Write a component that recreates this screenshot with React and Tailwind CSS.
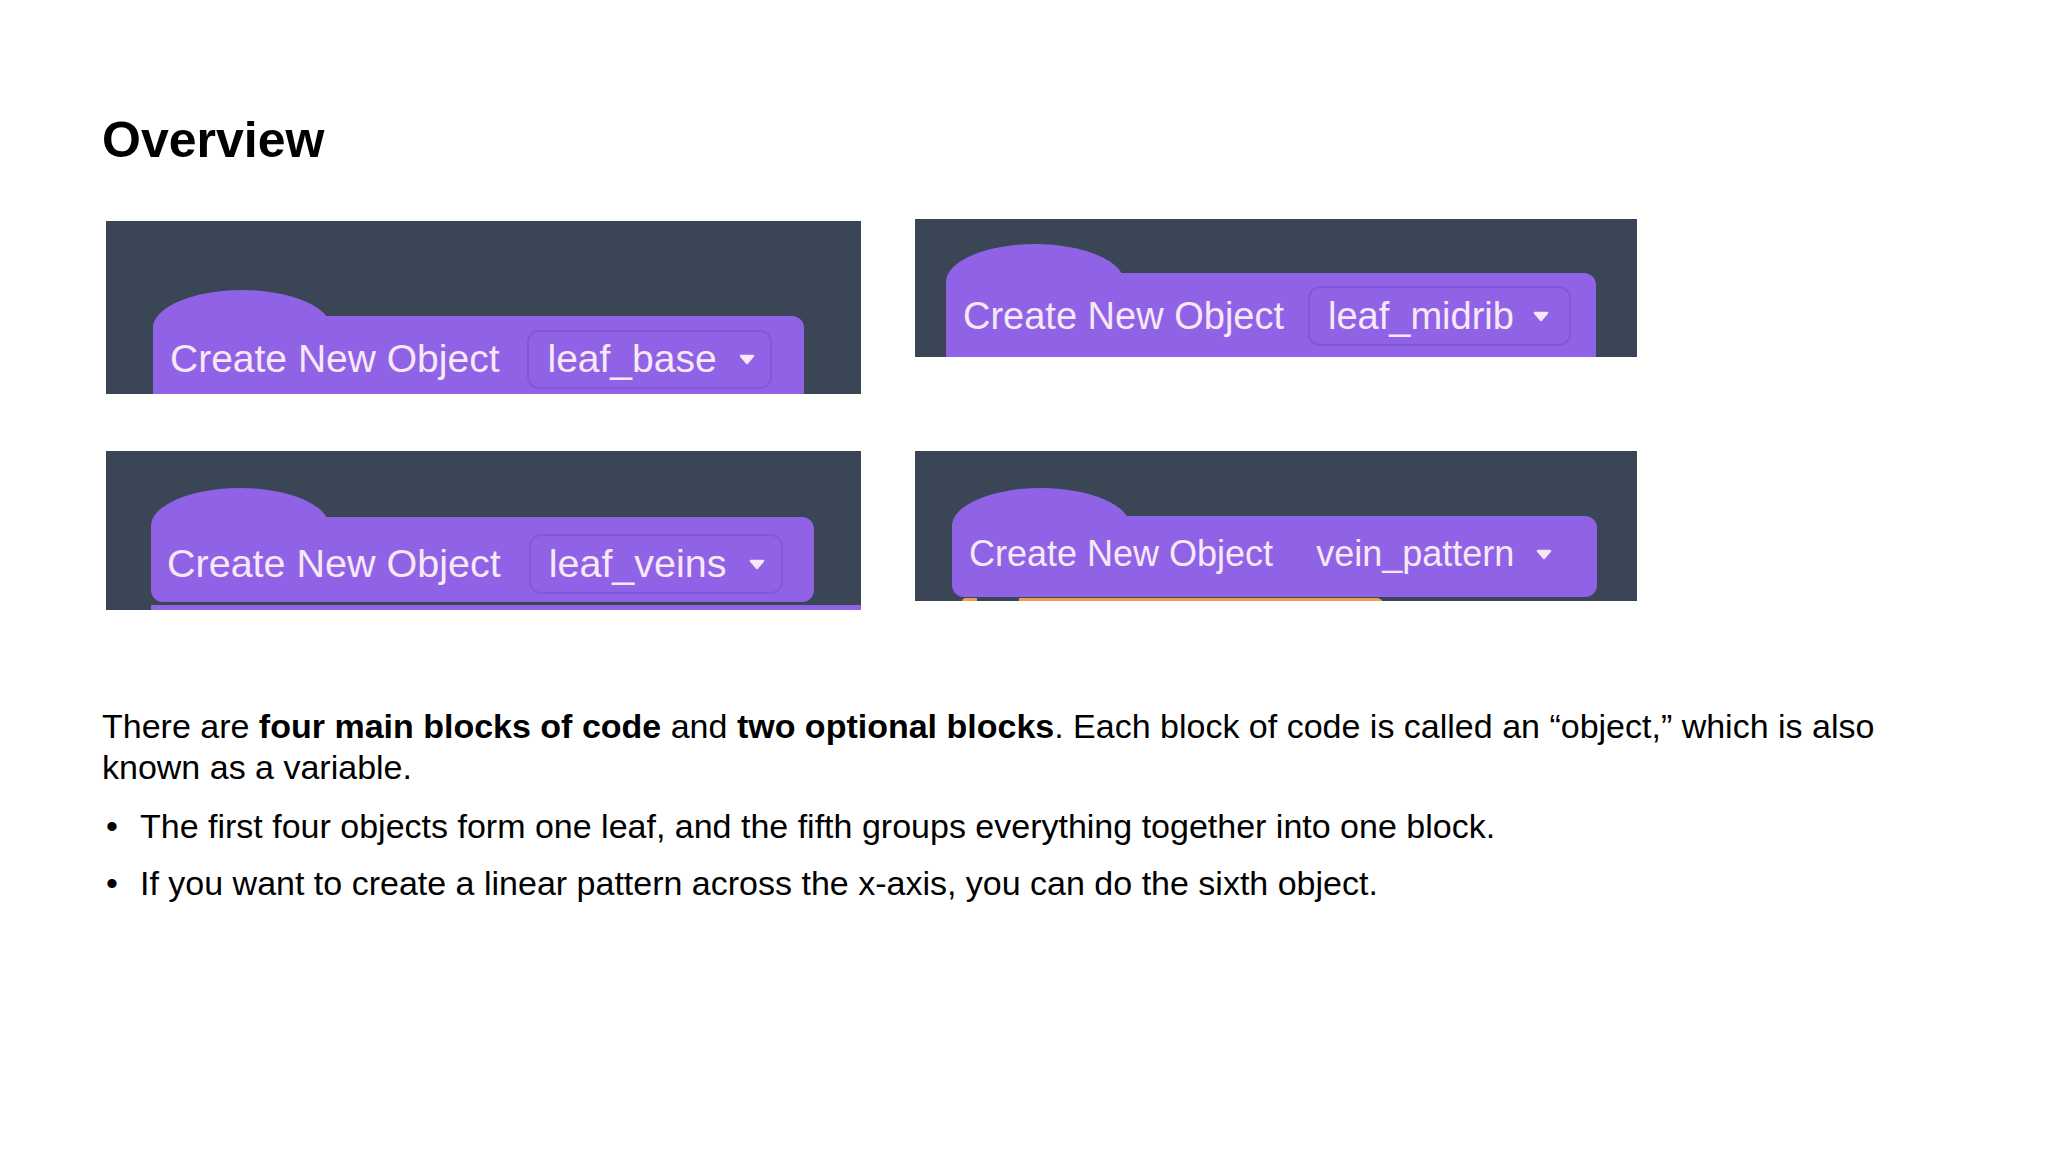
import React from 'react'

const PURPLE = 'bg-[#9063e6]'

function Arrow() {
  return (
    <svg width="16" height="11" viewBox="0 0 16 11" className="shrink-0">
      <path d="M2 2 L14 2 L8 9 Z" fill="#f7e8f7" stroke="#f7e8f7" strokeWidth="2.5" strokeLinejoin="round" />
    </svg>
  )
}

function Block({ b }) {
  return (
    <div
      className="bg-[#3a4556] overflow-hidden flex flex-col"
      style={{ width: b.w, height: b.h, marginTop: b.mt || 0, paddingLeft: b.left, paddingTop: b.hatTop }}
    >
      <div className={`${PURPLE} w-[178px] h-[62px] rounded-t-[89px_38px] shrink-0`} style={{ marginBottom: -(62 - b.rise) }} />
      <div
        className={`${PURPLE} rounded-[12px] flex items-start shrink-0 relative`}
        style={{ width: b.bodyW, height: b.bodyH, paddingLeft: b.pl, paddingTop: b.ddTop, gap: b.gap }}
      >
        <span
          className="text-[#f7e8f7] whitespace-nowrap flex items-center"
          style={{ fontSize: b.fs, height: b.ddH }}
        >
          Create New Object
        </span>
        <div
          className={`flex items-center rounded-[12px] border-2 ${b.border ? 'border-[#8456da]' : 'border-transparent'}`}
          style={{ height: b.ddH, paddingLeft: b.ddPl, paddingRight: b.ddPr, gap: b.arrowGap }}
        >
          <span className="text-[#f7e8f7] whitespace-nowrap" style={{ fontSize: b.fs }}>{b.name}</span>
          <Arrow />
        </div>
      </div>
      {b.strip === 'purple' && <div className={`${PURPLE} h-[6px] mt-[3px] shrink-0`} />}
      {b.strip === 'orange' && (
        <div className="flex h-[6px] mt-[1px] shrink-0 ml-[10px]">
          <div className="w-[15px] bg-[#ef9f55] rounded-tl-[4px]" />
          <div className="w-[42px]" />
          <div className="w-[364px] bg-[#ef9f55] rounded-tr-[6px]" />
        </div>
      )}
    </div>
  )
}

const blocks = [
  { w: 755, h: 173, mt: 2, left: 47, hatTop: 69, rise: 26, bodyW: 651, bodyH: 110, pl: 17, ddTop: 14, ddH: 59, fs: 39, gap: 28, name: 'leaf_base', ddPl: 18, ddPr: 15, arrowGap: 22, border: true },
  { w: 722, h: 138, mt: 0, left: 31, hatTop: 25, rise: 29, bodyW: 650, bodyH: 110, pl: 17, ddTop: 13, ddH: 60, fs: 38, gap: 24, name: 'leaf_midrib', ddPl: 18, ddPr: 20, arrowGap: 19, border: true },
  { w: 755, h: 159, mt: 0, left: 45, hatTop: 37, rise: 29, bodyW: 663, bodyH: 85, pl: 16, ddTop: 17, ddH: 60, fs: 39.5, gap: 28, name: 'leaf_veins', ddPl: 18, ddPr: 16, arrowGap: 22, border: true, strip: 'purple' },
  { w: 722, h: 150, mt: 0, left: 37, hatTop: 37, rise: 28, bodyW: 645, bodyH: 81, pl: 17, ddTop: 8, ddH: 60, fs: 36, gap: 24, name: 'vein_pattern', ddPl: 17, ddPr: 24, arrowGap: 22, border: false, strip: 'orange' },
]

export default function App() {
  return (
    <div className="min-h-screen w-full bg-white pl-[102px] pt-[115px] font-['Liberation_Sans',Arial,sans-serif] text-black">
      <h1 className="text-[50px] leading-none font-bold">Overview</h1>

      <div className="grid grid-cols-[755px_722px] gap-x-[54px] gap-y-[57px] items-start mt-[54px] ml-[4px]">
        {blocks.map(b => <Block key={b.name} b={b} />)}
      </div>

      <div className="mt-[96px] w-[1820px] text-[34px] leading-[40.5px]">
        <p>
          There are <b>four main blocks of code</b> and <b>two optional blocks</b>. Each block of code is called an “object,” which is also known as a variable.
        </p>
        <div className="flex mt-[19px]">
          <span className="w-[38px] pl-[4px] shrink-0">•</span>
          <span>The first four objects form one leaf, and the fifth groups everything together into one block.</span>
        </div>
        <div className="flex mt-[16px]">
          <span className="w-[38px] pl-[4px] shrink-0">•</span>
          <span>If you want to create a linear pattern across the x-axis, you can do the sixth object.</span>
        </div>
      </div>
    </div>
  )
}
